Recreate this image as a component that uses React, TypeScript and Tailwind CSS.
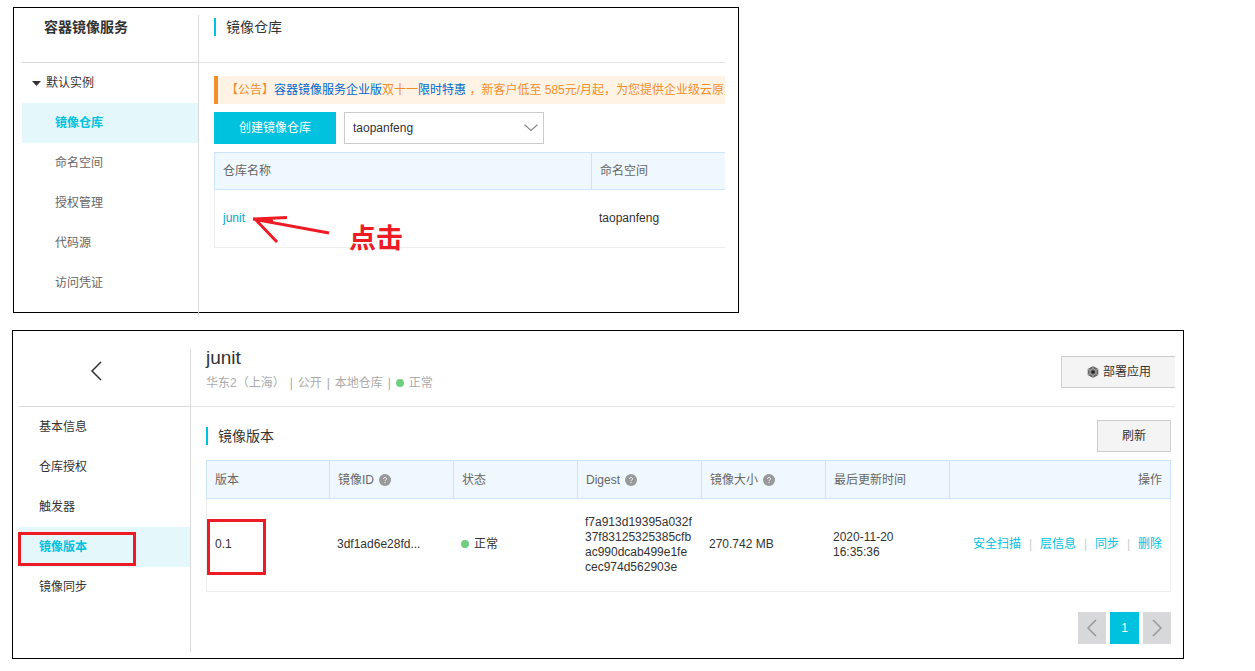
import { useState } from "react";

const instanceMenu = [
  { id: "repos", label: "镜像仓库" },
  { id: "namespaces", label: "命名空间" },
  { id: "grants", label: "授权管理" },
  { id: "source", label: "代码源" },
  { id: "credentials", label: "访问凭证" },
];

const repoMenu = [
  { id: "info", label: "基本信息" },
  { id: "auth", label: "仓库授权" },
  { id: "triggers", label: "触发器" },
  { id: "tags", label: "镜像版本" },
  { id: "sync", label: "镜像同步" },
];

const actions = ["安全扫描", "层信息", "同步", "删除"];

function SectionTitle({ children }: { children: string }) {
  return (
    <h2 className="flex h-[18px] items-center border-l-2 border-[#00c1de] pl-[10px] text-sm text-[#333]">
      {children}
    </h2>
  );
}

function HelpIcon() {
  return (
    <svg viewBox="0 0 12 12" className="ml-[5px] h-3 w-3 shrink-0">
      <circle cx="6" cy="6" r="6" fill="#999" />
      <path
        d="M4.5 4.8a1.5 1.4 0 1 1 2.3 1.2c-.6.3-.8.5-.8 1.1M6 8v1.1"
        fill="none"
        stroke="#f0f8ff"
        strokeWidth="1"
      />
    </svg>
  );
}

function DeployIcon() {
  return (
    <svg viewBox="0 0 12 12" className="h-3 w-3 shrink-0">
      <path d="M6 0l5.3 3v6L6 12 .7 9V3z" fill="#666" />
      <path
        d="M6 2.6l3 1.7v3.4L6 9.4 3 7.7V4.3zM6 0v2.6M6 9.4V12M.7 3L3 4.3M11.3 3L9 4.3M.7 9L3 7.7M11.3 9L9 7.7"
        fill="none"
        stroke="#c4c4c4"
        strokeWidth="0.7"
      />
      <circle cx="6" cy="6" r="1.6" fill="#222" />
    </svg>
  );
}

function Chevron({ className, points }: { className: string; points: string }) {
  return (
    <svg viewBox="0 0 20 20" className={className}>
      <polyline points={points} fill="none" stroke="currentColor" strokeWidth="1.5" />
    </svg>
  );
}

function StatusDot() {
  return <span className="mr-[5px] h-2 w-2 shrink-0 rounded-full bg-[#6fcf7f]" />;
}

function RepositoryPanel() {
  const [open, setOpen] = useState(true);
  const [namespace, setNamespace] = useState("taopanfeng");

  return (
    <section className="ml-px w-full max-w-[726px] border border-black pt-[7px] pr-[13px] pl-2">
      {/* The divider runs a little past the frame */}
      <div className="-mb-1 flex">
        <nav className="w-[177px] shrink-0 border-r border-[#d9d9d9] pb-[13px]">
          <h1 className="h-12 border-b border-[#d9d9d9] pl-[22px] text-sm leading-6 font-bold text-[#333]">
            容器镜像服务
          </h1>
          <button
            type="button"
            aria-expanded={open}
            onClick={() => setOpen(!open)}
            className="flex h-10 w-full items-center gap-[5px] pl-[10px] text-[#333]"
          >
            <svg viewBox="0 0 9 5" className="h-[5px] w-[9px]">
              <path d="M0 0h9L4.5 5z" fill="#333" />
            </svg>
            默认实例
          </button>
          {open &&
            instanceMenu.map((item) => (
              <a
                key={item.id}
                href={`#${item.id}`}
                className={
                  item.id === "repos"
                    ? "flex h-10 items-center bg-[#e4f8fc] pl-[33px] font-bold text-[#00c1de]"
                    : "flex h-10 items-center pl-[33px] text-[#666]"
                }
              >
                {item.label}
              </a>
            ))}
        </nav>

        <div className="min-w-0 flex-1">
          <header className="h-12 border-b border-[#e3e3e3] pt-[3px] pl-[15px]">
            <SectionTitle>镜像仓库</SectionTitle>
          </header>

          <div className="pt-[13px] pl-[15px]">
            <p className="h-7 overflow-hidden border-l-4 border-[#f28f2c] bg-[#fff3e6] pl-2 leading-7 whitespace-nowrap text-[#f28f2c]">
              【公告】
              <a href="#enterprise" className="text-[#0066cc]">
                容器镜像服务企业版
              </a>
              双十一
              <a href="#sale" className="text-[#0066cc]">
                限时特惠
              </a>{" "}
              ，新客户低至 585元/月起，为您提供企业级云原生
            </p>

            <div className="mt-2 flex gap-2">
              <button type="button" className="h-8 w-[122px] bg-[#00c1de] text-white">
                创建镜像仓库
              </button>
              <div className="relative w-[200px]">
                <select
                  aria-label="命名空间"
                  value={namespace}
                  onChange={(e) => setNamespace(e.target.value)}
                  className="h-8 w-full appearance-none rounded-none border border-[#ccc] bg-white pl-2 text-[#333]"
                >
                  <option value="taopanfeng">taopanfeng</option>
                </select>
                <Chevron
                  points="2,6 10,13 18,6"
                  className="pointer-events-none absolute top-2 right-[5px] h-4 w-4 text-[#888]"
                />
              </div>
            </div>

            <table className="mt-2 w-full table-fixed border-separate border-spacing-0 text-left">
              <colgroup>
                <col className="w-[377px]" />
                <col />
              </colgroup>
              <thead>
                <tr className="h-[38px] bg-[#f0f8ff] text-[#666]">
                  <th className="border border-r-0 border-[#cce5ff] pl-2 font-normal">仓库名称</th>
                  <th className="border border-r-0 border-[#cce5ff] pl-2 font-normal">命名空间</th>
                </tr>
              </thead>
              <tbody>
                <tr className="h-[58px]">
                  <td className="relative border-b border-l border-[#eee] pb-0.5 pl-2">
                    <a href="#junit" className="text-[#00a8cc]">
                      junit
                    </a>
                    <svg
                      viewBox="0 0 80 32"
                      className="absolute top-6 left-9 h-8 w-20 text-[#ed1c24]"
                    >
                      <path
                        d="M2 5L78 19M2 5L36 3.5M4 5L26 28M5 5L22 6.5"
                        fill="none"
                        stroke="currentColor"
                        strokeWidth="3"
                      />
                    </svg>
                    <strong className="absolute top-[33px] left-[134px] text-[27px] leading-8 text-[#ed1c24]">
                      点击
                    </strong>
                  </td>
                  <td className="border-b border-[#eee] pb-0.5 pl-2 text-[#333]">{namespace}</td>
                </tr>
              </tbody>
            </table>
          </div>
        </div>
      </div>
    </section>
  );
}

function VersionPanel() {
  return (
    <section className="mt-[17px] border border-black pt-[18px] pr-2 pb-[6px] pl-[6px]">
      <div className="flex">
        <nav className="w-[172px] shrink-0 border-r border-[#d9d9d9] pb-[45px]">
          <div className="h-[58px] border-b border-[#d9d9d9] pt-3 pl-[68px]">
            <button type="button" aria-label="返回" className="block text-[#333]">
              <Chevron points="14,1 5,10 14,19" className="h-5 w-5" />
            </button>
          </div>
          {repoMenu.map((item) =>
            item.id === "tags" ? (
              <a
                key={item.id}
                href={`#${item.id}`}
                className="relative flex h-10 items-center bg-[#e4f8fc] pl-5 font-bold text-[#00c1de]"
              >
                {item.label}
                <span className="absolute top-[5px] -left-px h-[34px] w-[118px] border-3 border-[#ed1c24]" />
              </a>
            ) : (
              <a
                key={item.id}
                href={`#${item.id}`}
                className="flex h-10 items-center pl-5 text-[#333]"
              >
                {item.label}
              </a>
            )
          )}
        </nav>

        <div className="min-w-0 flex-1">
          <header className="flex h-[58px] justify-between border-b border-[#e3e3e3] pl-[15px]">
            <div>
              <h1 className="text-[19px] leading-[18px] text-[#333]">junit</h1>
              <p className="mt-[7px] flex h-[18px] items-center text-[#aaa]">
                <span>华东2（上海）</span>
                <span className="w-[13px] text-center">|</span>
                <span>公开</span>
                <span className="w-[13px] text-center">|</span>
                <span>本地仓库</span>
                <span className="w-[13px] text-center">|</span>
                <StatusDot />
                <span>正常</span>
              </p>
            </div>
            <button
              type="button"
              className="mt-[7px] flex h-8 items-center gap-1 border border-r-0 border-[#ccc] bg-[#f4f4f4] pr-6 pl-[25px] text-[#333]"
            >
              <DeployIcon />
              部署应用
            </button>
          </header>

          <div className="pt-[13px] pr-1 pl-[15px]">
            <div className="flex items-center justify-between pb-2">
              <SectionTitle>镜像版本</SectionTitle>
              <button
                type="button"
                className="h-8 w-[74px] border border-[#ccc] bg-[#f4f4f4] text-[#333]"
              >
                刷新
              </button>
            </div>

            <table className="w-full table-fixed border-separate border-spacing-0 text-left">
              <colgroup>
                <col className="w-[123px]" />
                <col className="w-[124px]" />
                <col className="w-[124px]" />
                <col className="w-[124px]" />
                <col className="w-[124px]" />
                <col className="w-[124px]" />
                <col />
              </colgroup>
              <thead>
                <tr className="h-[39px] bg-[#f0f8ff] text-[#666]">
                  <th className="border border-r-0 border-[#cce5ff] px-2 font-normal">版本</th>
                  <th className="border border-r-0 border-[#cce5ff] px-2 font-normal">
                    <span className="flex items-center">
                      镜像ID
                      <HelpIcon />
                    </span>
                  </th>
                  <th className="border border-r-0 border-[#cce5ff] px-2 font-normal">状态</th>
                  <th className="border border-r-0 border-[#cce5ff] px-2 font-normal">
                    <span className="flex items-center">
                      Digest
                      <HelpIcon />
                    </span>
                  </th>
                  <th className="border border-r-0 border-[#cce5ff] px-2 font-normal">
                    <span className="flex items-center">
                      镜像大小
                      <HelpIcon />
                    </span>
                  </th>
                  <th className="border border-r-0 border-[#cce5ff] px-2 font-normal">
                    最后更新时间
                  </th>
                  <th className="border border-[#cce5ff] px-2 text-right font-normal">操作</th>
                </tr>
              </thead>
              <tbody>
                <tr className="text-[#333]">
                  <td className="relative border-b border-l border-[#eee] px-2 pb-0.5">
                    0.1
                    <span className="absolute top-5 left-0 h-14 w-[59px] border-3 border-[#ed1c24]" />
                  </td>
                  <td className="border-b border-[#eee] px-2 pb-0.5">3df1ad6e28fd...</td>
                  <td className="border-b border-[#eee] px-2 pb-0.5">
                    <span className="flex items-center">
                      <StatusDot />
                      正常
                    </span>
                  </td>
                  <td className="border-b border-[#eee] px-2 py-4 leading-[15px] break-all">
                    f7a913d19395a032f37f83125325385cfbac990dcab499e1fecec974d562903e
                  </td>
                  <td className="border-b border-[#eee] px-2 pb-0.5">270.742 MB</td>
                  <td className="border-b border-[#eee] px-2 leading-[15px]">
                    2020-11-20 16:35:36
                  </td>
                  <td className="border-r border-b border-[#eee] px-2 pb-0.5">
                    <div className="flex justify-end">
                      {actions.map((action, i) => (
                        <span key={action} className="flex">
                          {i > 0 && <span className="w-[19px] text-center text-[#ccc]">|</span>}
                          <a href="#tags" className="text-[#00c1de]">
                            {action}
                          </a>
                        </span>
                      ))}
                    </div>
                  </td>
                </tr>
              </tbody>
            </table>

            <div className="mt-5 flex justify-end gap-1">
              <button
                type="button"
                aria-label="上一页"
                className="flex h-8 w-7 items-center justify-center bg-[#d7d8d9] text-[#999]"
              >
                <Chevron points="14,2 6,10 14,18" className="h-5 w-5" />
              </button>
              <button type="button" className="h-8 w-[29px] bg-[#00c1de] text-white">
                1
              </button>
              <button
                type="button"
                aria-label="下一页"
                className="flex h-8 w-7 items-center justify-center bg-[#d7d8d9] text-[#999]"
              >
                <Chevron points="6,2 14,10 6,18" className="h-5 w-5" />
              </button>
            </div>
          </div>
        </div>
      </div>
    </section>
  );
}

export default function App() {
  return (
    <main className="min-h-screen bg-white pt-[7px] pr-[71px] pb-3 pl-3 font-['Liberation_Sans','Noto_Sans_CJK_SC',sans-serif] text-xs">
      <RepositoryPanel />
      <VersionPanel />
    </main>
  );
}
